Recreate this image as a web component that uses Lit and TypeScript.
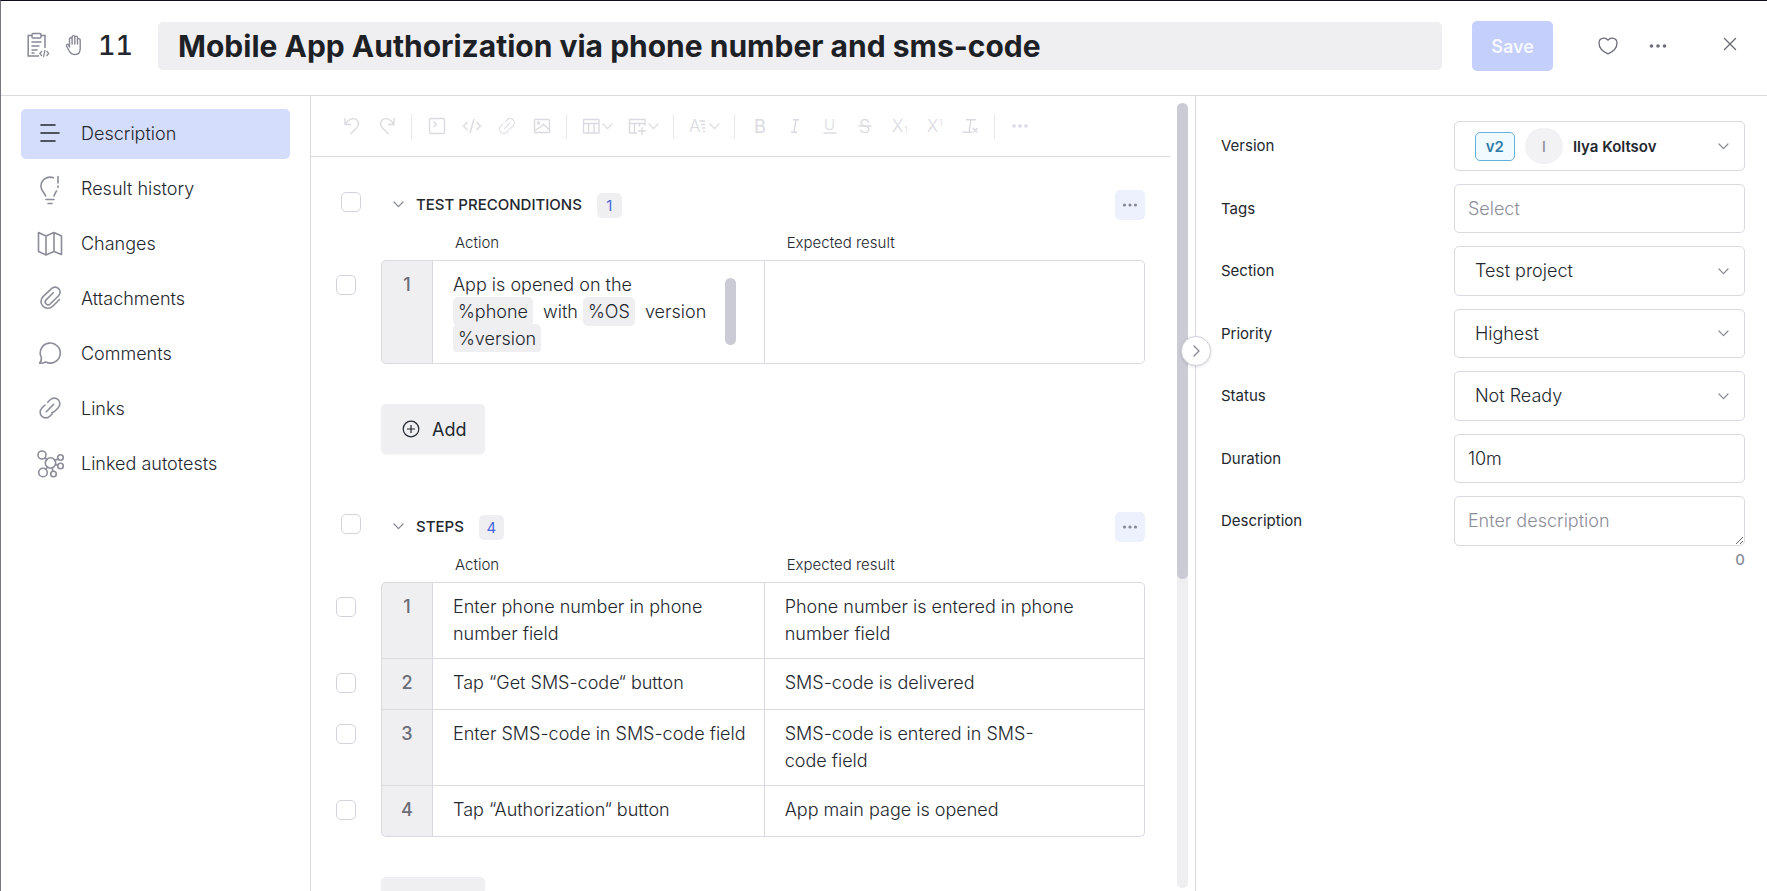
import { LitElement, html, svg, css, nothing } from "lit";
import { customElement, property, state } from "lit/decorators.js";
import { classMap } from "lit/directives/class-map.js";

const chevronDown = html`<svg class="chev" width="11" height="7" viewBox="0 0 11 7" fill="none" stroke="currentColor" stroke-width="1.2" stroke-linecap="round" stroke-linejoin="round" aria-hidden="true"><path d="M1 1l4.500 4.700L10 1" /></svg>`;

const dots = (w: number, gap: number, r: number) => html`<svg width=${w} height="6" viewBox="0 0 ${w} 6" fill="currentColor" aria-hidden="true">
  <circle cx=${w / 2 - gap} cy="3" r=${r} /><circle cx=${w / 2} cy="3" r=${r} /><circle cx=${w / 2 + gap} cy="3" r=${r} />
</svg>`;

const linkShape = svg`<path d="M9.700 6.300l2.500-2.500a5.600 5.600 0 0 1 8 8l-3.200 3.200a5.600 5.600 0 0 1-3 1.500" /><path d="M14.300 17.700l-2.500 2.500a5.600 5.600 0 0 1-8-8L7 9" /><path d="M8.300 15.700l7.400-7.400" />`;

const navIcons: Record<string, unknown> = {
  description: svg`<path d="M4 5h14M4 13h18M4 21h14" />`,
  history: svg`<path d="M16.500 2.800C10 .500 3.500 5 4 12c.300 4 3.500 5.500 4.600 9M21 1.500v6.500M21 11v1.500M19.500 16c-1 1.600-2 3-2.500 5M9 24.500h8M11 28.500h4" />`,
  changes: svg`<path d="M1.500 2.500L9 6l8-3.500L24.500 6v18.500L17 21.500 9 25l-7.500-3.500zM9 6v19M17 2.500v19" />`,
  attachments: svg`<path d="M22.500 14.500l-6.800 6.800a6.800 6.800 0 0 1-9.700-9.700L14.500 3.600a5 5 0 0 1 7.100 7.100l-8.400 8.300a2.900 2.900 0 0 1-4.100-4.100l7.200-7.200" />`,
  comments: svg`<path d="M4.300 17.500A10 10 0 1 1 8.800 22c-2 1-4.300 1.400-6.300 1.200 1.500-1.500 2.200-3.500 1.800-5.700z" />`,
  links: svg`<g transform="translate(1 1)">${linkShape}</g>`,
  autotests: svg`<circle cx="13.500" cy="13" r="5.200" /><circle cx="5" cy="5" r="4" /><circle cx="6" cy="22.500" r="4.300" /><circle cx="16.500" cy="24" r="2.800" /><circle cx="23.500" cy="7.500" r="2.800" /><circle cx="23.500" cy="16" r="2.800" /><path d="M8 8l2 1.500M8.800 19l2-2M15.300 18l.500 3M18 10.500l3-1.700M18.500 14.500l2.300.700" />`,
};

const tools: Record<string, unknown> = {
  undo: svg`<path d="M2 1v6.500h6M2.500 7C5 2 10 .200 13.500 2.800c3.200 2.600 2.500 5.700-.500 8.700L7.500 17" />`,
  redo: svg`<path d="M16 1v6.500h-6M15.500 7C13 2 8 .200 4.500 2.800 1.300 5.400 2 8.500 5 11.500l5.500 5.500" />`,
  block: svg`<rect x="1.500" y="1.500" width="15" height="15" rx="1.500" /><path d="M5.500 4.500l3 2.800-3 2.800" />`,
  code: svg`<path d="M4.500 5L.500 9l4 4M13.500 5l4 4-4 4M11 2L7 16" />`,
  link: svg`<g transform="scale(.75)">${linkShape}</g>`,
  image: svg`<rect x="1.500" y="2.500" width="15" height="13" rx="1" /><circle cx="5.500" cy="6" r="1" /><path d="M2 13.500l6-4 2.500-2.200 6 5.700" />`,
  table: svg`<rect x="1.500" y="2.500" width="15.500" height="13.500" rx=".500" /><path d="M1.500 6.500h15.500M6.500 6.500V16M12 6.500V16" />`,
  tableAdd: svg`<path d="M17 8.500v-6H1.500V16H9M1.500 6.500H17M6.500 6.500V16M11.500 6.500V9.500M14 10v8M10 14h8" />`,
  font: svg`<text x="0" y="15" font-size="17">A</text><path d="M10.500 4H16M12 7.500h4M13 11h3M14 14.500h2" />`,
  bold: svg`<text class="medium" x="3" y="15.500" font-size="18">B</text>`,
  italic: svg`<path d="M7 2.800h6M5 15.200h6M10 2.800L8 15.200" />`,
  underline: svg`<text x="3" y="13" font-size="15">U</text><path d="M2.500 16h13" />`,
  strike: svg`<text x="3" y="15.500" font-size="18">S</text><path d="M2.500 9h13" />`,
  sub: svg`<text x="1" y="15" font-size="17">X</text><text x="13" y="16" font-size="9">1</text>`,
  sup: svg`<text x="1" y="15" font-size="17">X</text><text x="13" y="9" font-size="9">1</text>`,
  clear: svg`<path d="M5 2.800h10M10 2.800L8 15.200M1.500 15.200h9.500M12 11l4.500 4.500M16.500 11L12 15.500" />`,
};

type Tool = { icon: string; label: string; menu?: boolean };
const toolGroups: Tool[][] = [
  [{ icon: "undo", label: "Undo" }, { icon: "redo", label: "Redo" }],
  [
    { icon: "block", label: "Code block" },
    { icon: "code", label: "Inline code" },
    { icon: "link", label: "Link" },
    { icon: "image", label: "Image" },
  ],
  [{ icon: "table", label: "Table", menu: true }, { icon: "tableAdd", label: "Insert into table", menu: true }],
  [{ icon: "font", label: "Text style", menu: true }],
  [
    { icon: "bold", label: "Bold" },
    { icon: "italic", label: "Italic" },
    { icon: "underline", label: "Underline" },
    { icon: "strike", label: "Strikethrough" },
    { icon: "sub", label: "Subscript" },
    { icon: "sup", label: "Superscript" },
    { icon: "clear", label: "Clear formatting" },
  ],
];

type Step = { action: unknown; expected: string; scroll?: boolean };

const preconditions: Step[] = [
  {
    action: html`App is opened on the <span class="param">%phone</span> with <span class="param">%OS</span> version <span class="param">%version</span>`,
    expected: "",
    scroll: true,
  },
];

const steps: Step[] = [
  { action: "Enter phone number in phone number field", expected: "Phone number is entered in phone number field" },
  { action: "Tap “Get SMS-code“ button", expected: "SMS-code is delivered" },
  { action: "Enter SMS-code in SMS-code field", expected: "SMS-code is entered in SMS-\ncode field" },
  { action: "Tap “Authorization“ button", expected: "App main page is opened" },
];

const base = css`
  *, *::before, *::after { box-sizing: border-box; }
  button, input, select, textarea { font: inherit; color: inherit; margin: 0; }
  button { background: none; border: 0; padding: 0; display: inline-flex; align-items: center; justify-content: center; cursor: pointer; }
  svg { display: block; flex: none; overflow: visible; }
`;

@customElement("editor-toolbar")
export class EditorToolbar extends LitElement {
  static styles = [base, css`
    :host { display: flex; align-items: center; height: 61px; padding: 0 23px; border-bottom: 1px solid #d9d9e2; color: #dadae1; }
    .group { display: flex; }
    .tool { width: 35px; height: 36px; }
    .menu { width: 46px; gap: 2px; }
    .tool text { fill: currentColor; stroke: none; font-weight: 300; }
    .tool text.medium { font-weight: 400; }
    .sep { width: 1px; height: 25px; margin: 0 7px; background: #e8e8ed; }
  `];

  render() {
    return html`
      ${toolGroups.map((group) => html`
        <div class="group">
          ${group.map((t) => html`
            <button class=${classMap({ tool: true, menu: !!t.menu })} type="button" aria-label=${t.label}>
              <svg width="18" height="18" viewBox="0 0 18 18" fill="none" stroke="currentColor" stroke-width="1.400" aria-hidden="true">${tools[t.icon]}</svg>
              ${t.menu ? chevronDown : nothing}
            </button>`)}
        </div>
        <span class="sep"></span>`)}
      <button class="tool" type="button" aria-label="More tools">${dots(18, 6, 1.8)}</button>
    `;
  }
}

@customElement("step-section")
export class StepSection extends LitElement {
  @property() heading = "";
  @property({ attribute: false }) rows: Step[] = [];
  @state() private open = true;

  static styles = [base, css`
    :host { display: block; }
    .head { display: flex; align-items: center; height: 30px; padding-left: 5px; }
    .check { appearance: none; display: block; width: 20px; height: 20px; margin: 0; border: 1px solid #d3d3dc; border-radius: 5px; background: #fff; }
    .check:checked { background: #5370e8; }
    .head .check { margin-bottom: 6px; }
    .toggle { margin-left: 32px; gap: 12px; height: 28px; margin-bottom: 2px; color: #23272e; font-weight: 500; font-size: 15px; }
    .toggle .chev { color: #868894; }
    .title { margin: 0; font: inherit; text-transform: uppercase; }
    .count { min-width: 25px; height: 25px; line-height: 25px; margin-left: 15px; border-radius: 5px; background: #efeff2; color: #4a66dd; font-size: 15px; text-align: center; }
    .more { width: 30px; height: 30px; margin-left: auto; border-radius: 5px; background: #edf1fd; color: #868894; }
    .steps { width: 100%; table-layout: fixed; border-collapse: separate; border-spacing: 0; font-size: 18px; line-height: 27px; }
    .c-check { width: 45px; }
    .c-num { width: 52px; }
    .c-action { width: 41%; }
    th { text-align: left; }
    thead th { height: 40px; padding: 6px 22px 0; font-size: 15px; line-height: 20px; font-weight: 300; vertical-align: middle; }
    thead .bare { padding: 0; }
    .pick { padding: 15px 0 0; vertical-align: top; }
    tbody tr:not(:first-child) .pick { padding-top: 14px; }
    .cell { height: 51px; padding: 10px 14px 11px 20px; border: solid #d9d9e0; border-width: 0 1px 1px 0; vertical-align: top; font-weight: 300; white-space: pre-line; }
    .num { padding: 10px 0 11px; border-left-width: 1px; background: #efeff2; color: #6b6d77; font-weight: 500; text-align: center; }
    tbody tr:first-child .cell { border-top-width: 1px; height: 52px; }
    tbody tr:first-child .num { border-top-left-radius: 5px; }
    tbody tr:first-child .cell:last-child { border-top-right-radius: 5px; }
    tbody tr:last-child .num { border-bottom-left-radius: 5px; }
    tbody tr:last-child .cell:last-child { border-bottom-right-radius: 5px; }
    .scroller { display: flex; align-items: flex-start; overflow: hidden; }
    .scroll-text { flex: 1; padding-right: 16px; }
    .scroll-bar { width: 11px; height: 67px; margin: 7px 14px 0 0; border-radius: 6px; background: #cbcbd5; }
    .param { padding: 4px 5px; margin-right: 5px; border-radius: 5px; background: #efeff2; }
    .add { gap: 12px; height: 50px; margin: 40px 0 0 45px; padding: 0 19px 0 21px; border-radius: 5px; background: #efeff2; font-size: 18px; box-shadow: 0 1px 2px rgba(0, 0, 0, 0.04); }
  `];

  render() {
    return html`
      <div class="head">
        <input class="check" type="checkbox" aria-label="Select all: ${this.heading}" />
        <button class="toggle" type="button" aria-expanded=${this.open} @click=${() => (this.open = !this.open)}>
          ${chevronDown}<h2 class="title">${this.heading}</h2>
        </button>
        <span class="count">${this.rows.length}</span>
        <button class="more" type="button" aria-label="Section actions">${dots(16, 5.5, 1.6)}</button>
      </div>
      ${this.open ? html`
        <table class="steps">
          <colgroup><col class="c-check" /><col class="c-num" /><col class="c-action" /><col /></colgroup>
          <thead>
            <tr><td class="bare"></td><td class="bare"></td><th scope="col">Action</th><th scope="col">Expected result</th></tr>
          </thead>
          <tbody>
            ${this.rows.map((r, i) => html`<tr>
              <td class="pick"><input class="check" type="checkbox" aria-label="Select step ${i + 1}" /></td>
              <th class="cell num" scope="row">${i + 1}</th>
              <td class="cell">${r.scroll
                ? html`<div class="scroller"><div class="scroll-text">${r.action}</div><div class="scroll-bar"></div></div>`
                : r.action}</td>
              <td class="cell">${r.expected}</td>
            </tr>`)}
          </tbody>
        </table>
        <button class="add" type="button">
          <svg width="18" height="18" viewBox="0 0 18 18" fill="none" stroke="currentColor" stroke-width="1.200" aria-hidden="true"><circle cx="9" cy="9" r="7.800" /><path d="M9 5v8M5 9h8" /></svg>
          Add
        </button>` : nothing}
    `;
  }
}

@customElement("side-nav")
export class SideNav extends LitElement {
  @state() private active = "description";

  private items = [
    ["description", "Description"],
    ["history", "Result history"],
    ["changes", "Changes"],
    ["attachments", "Attachments"],
    ["comments", "Comments"],
    ["links", "Links"],
    ["autotests", "Linked autotests"],
  ];

  static styles = [base, css`
    :host { display: block; padding: 13px 20px; border-right: 1px solid #d9d9e2; }
    .list { display: flex; flex-direction: column; gap: 5px; }
    .item { display: flex; align-items: center; gap: 17px; height: 50px; padding: 0 15px 2px; border-radius: 5px; color: #23272e; font-size: 18px; font-weight: 300; text-decoration: none; }
    .item svg { color: #8b8d99; }
    .active { background: #d5ddfc; }
    .item.active svg { color: #23272e; }
  `];

  render() {
    return html`<nav class="list" aria-label="Test case">
      ${this.items.map(([id, label]) => html`
        <a class=${classMap({ item: true, active: id === this.active })} href="#${id}" @click=${() => (this.active = id)}>
          <svg width="28" height="28" viewBox="-1 -1 28 28" fill="none" stroke="currentColor" stroke-width="1.600" stroke-linecap="round" stroke-linejoin="round" aria-hidden="true">${navIcons[id]}</svg>
          ${label}
        </a>`)}
    </nav>`;
  }
}

@customElement("case-fields")
export class CaseFields extends LitElement {
  static styles = [base, css`
    :host { display: block; padding: 25px 22px 0 25px; border-left: 1px solid #d9d9e0; position: relative; }
    .collapse { position: absolute; left: -15px; top: 240px; width: 30px; height: 30px; border: 1px solid #d3d3dc; border-radius: 50%; background: #fff; color: #868894; box-shadow: 0 1px 3px rgba(0, 0, 0, 0.15); }
    .form { display: flex; flex-direction: column; gap: 13px; }
    .row { display: grid; grid-template-columns: 4fr 5fr; align-items: center; }
    .label { padding-bottom: 1px; font-size: 15px; color: #23272e; }
    .control { width: 100%; height: 49px; border: 1px solid #d9d9e0; border-radius: 5px; background: #fff; color: #23272e; font-size: 18px; font-weight: 300; outline: none; }
    .input { padding: 0 13px; }
    .area { display: block; height: 50px; padding: 12px 13px; line-height: 24px; resize: vertical; overflow: hidden; }
    .input::placeholder, .area::placeholder { color: #8b8d99; opacity: 1; }
    .select { height: 50px; appearance: none; padding: 0 40px 1px 20px; }
    .select.short { height: 49px; }
    .wrap { display: grid; align-items: center; }
    .wrap > * { grid-area: 1 / 1; }
    .wrap .chev { justify-self: end; margin-right: 16px; pointer-events: none; }
    .chev { color: #868894; }
    .version { height: 50px; justify-content: flex-start; gap: 10px; padding: 0 15px 0 20px; overflow: hidden; }
    .tag { display: flex; align-items: center; justify-content: center; width: 40px; height: 29px; border: 1px solid #64b2dc; border-radius: 5px; background: #f1fafe; color: #2f7aa8; font-size: 15px; font-weight: 600; }
    .avatar { display: flex; align-items: center; justify-content: center; width: 38px; height: 36px; border-radius: 19px; background: #f2f2f4; color: #8b8d99; font-size: 14px; font-weight: 500; }
    .name { flex: 1; text-align: left; font-size: 15px; font-weight: 600; }
    .counter { margin: 5px 0 0; text-align: right; font-size: 15px; font-weight: 500; line-height: 18px; color: #8b8d99; }
  `];

  private select(id: string, label: string, value: string) {
    return html`<div class="row">
      <label class="label" for=${id}>${label}</label>
      <div class="wrap"><select class=${classMap({ control: true, select: true, short: id === "priority" })} id=${id}><option>${value}</option></select>${chevronDown}</div>
    </div>`;
  }

  render() {
    return html`
      <button class="collapse" type="button" aria-label="Collapse panel">
        <svg width="8" height="12" viewBox="0 0 8 12" fill="none" stroke="currentColor" stroke-width="1.300" stroke-linecap="round" stroke-linejoin="round" aria-hidden="true"><path d="M2 1l5 5-5 5" /></svg>
      </button>
      <form class="form" @submit=${(e: Event) => e.preventDefault()}>
        <div class="row">
          <label class="label" for="version">Version</label>
          <button class="control version" id="version" type="button" aria-haspopup="listbox">
            <span class="tag">v2</span><span class="avatar">I</span><span class="name">Ilya Koltsov</span>${chevronDown}
          </button>
        </div>
        <div class="row">
          <label class="label" for="tags">Tags</label>
          <input class="control input" id="tags" type="text" placeholder="Select" />
        </div>
        ${this.select("section", "Section", "Test project")}
        ${this.select("priority", "Priority", "Highest")}
        ${this.select("status", "Status", "Not Ready")}
        <div class="row">
          <label class="label" for="duration">Duration</label>
          <input class="control input" id="duration" type="text" value="10m" />
        </div>
        <div class="row">
          <label class="label" for="description">Description</label>
          <textarea class="control area" id="description" placeholder="Enter description"></textarea>
        </div>
      </form>
      <p class="counter">0</p>
    `;
  }
}

@customElement("app-root")
export class AppRoot extends LitElement {
  static styles = [base, css`
    :host { display: flex; flex-direction: column; box-sizing: border-box; height: 100vh; border-top: 1px solid #120c1f; border-left: 1px solid #77777d; background: #fff; color: #23272e; font-family: Inter, "Liberation Sans", sans-serif; overflow: hidden; }
    .header { flex: none; display: flex; align-items: center; height: 95px; padding: 0 12px 4px 25px; border-bottom: 1px solid #d9d9e0; color: #868894; }
    .ident { display: flex; align-items: center; gap: 14px; width: 132px; padding-bottom: 2px; }
    .number { color: #23272e; font-size: 27px; font-weight: 500; font-variant-numeric: tabular-nums; }
    .name { flex: 1; min-width: 0; height: 48px; padding: 0 20px; border: 0; border-radius: 5px; outline: none; background: #efeff2; color: #1d2126; font-size: 30px; font-weight: 700; }
    .save { width: 81px; height: 50px; margin: 0 30px; border-radius: 5px; background: #c5cffc; color: #f6f8ff; font-size: 18px; font-weight: 600; }
    .icon { width: 50px; height: 50px; color: #6b6d77; }
    .close { margin-left: 22px; }
    .body { flex: 1; min-height: 0; display: grid; grid-template-columns: 310px minmax(0, 1fr) 572px; }
    .main { display: flex; min-width: 0; min-height: 0; }
    .editor { flex: 1; min-width: 0; display: flex; flex-direction: column; }
    .content { flex: 1; min-height: 0; overflow: hidden; display: flex; flex-direction: column; gap: 58px; padding: 33px 25px 0; }
    .track { width: 11px; margin: 7px 7px 3px; border-radius: 6px; background: #efeff2; }
    .thumb { height: 60.6%; border-radius: 6px; background: #cbcbd5; }
  `];

  render() {
    return html`
      <header class="header">
        <div class="ident">
          <svg width="24" height="26" viewBox="0 0 24 26" fill="none" stroke="currentColor" stroke-width="1.500" aria-hidden="true">
            <path d="M6 3.500H2.200V24H13M15 3.500h4V16" /><rect x="6" y="1.500" width="9" height="4.500" rx="1" />
            <path d="M5.500 10h10M5.500 14h8M5.500 18h6M5.500 21h3" stroke-width="1.300" />
            <path d="M16 19l-2.200 2.500L16 24M20.500 19l2.200 2.500L20.500 24M19 18l-1.500 7" stroke-width="1.200" />
          </svg>
          <svg width="20" height="22" viewBox="0 0 20 22" fill="none" stroke="currentColor" stroke-width="1.400" stroke-linecap="round" stroke-linejoin="round" aria-hidden="true">
            <path d="M5.500 13V5a1.300 1.300 0 0 1 2.600 0v5V3a1.300 1.300 0 0 1 2.700 0v7V3.500a1.300 1.300 0 0 1 2.700 0V10 6a1.300 1.300 0 0 1 2.700 0v8.500c0 3.500-2 6-5.200 6-3 0-4.500-1-5.800-3.500L2.500 12c-.500-1.300.900-2.300 1.900-1.200z" />
          </svg>
          <span class="number">11</span>
        </div>
        <input class="name" type="text" aria-label="Test case name" value="Mobile App Authorization via phone number and sms-code" />
        <button class="save" type="button">Save</button>
        <button class="icon" type="button" aria-label="Add to favourites">
          <svg width="20" height="18" viewBox="0 0 20 18" fill="none" stroke="currentColor" stroke-width="1.300" stroke-linejoin="round" aria-hidden="true"><path d="M10 16.800C4 14.300 1 10 1 6c0-5 6-6.500 9-2.800C13 -.500 19 1 19 6c0 4-3 8.300-9 10.800z" /></svg>
        </button>
        <button class="icon" type="button" aria-label="More actions">${dots(18, 6.5, 1.8)}</button>
        <button class="icon close" type="button" aria-label="Close">
          <svg width="14" height="18" viewBox="0 0 14 18" fill="none" stroke="currentColor" stroke-width="1.400" stroke-linecap="round" aria-hidden="true"><path d="M1.500 1.500l11 11M12.500 1.500l-11 11" /></svg>
        </button>
      </header>
      <div class="body">
        <side-nav></side-nav>
        <main class="main">
          <div class="editor">
            <editor-toolbar></editor-toolbar>
            <div class="content">
              <step-section heading="Test preconditions" .rows=${preconditions}></step-section>
              <step-section heading="Steps" .rows=${steps}></step-section>
            </div>
          </div>
          <div class="track"><div class="thumb"></div></div>
        </main>
        <case-fields></case-fields>
      </div>
    `;
  }
}
